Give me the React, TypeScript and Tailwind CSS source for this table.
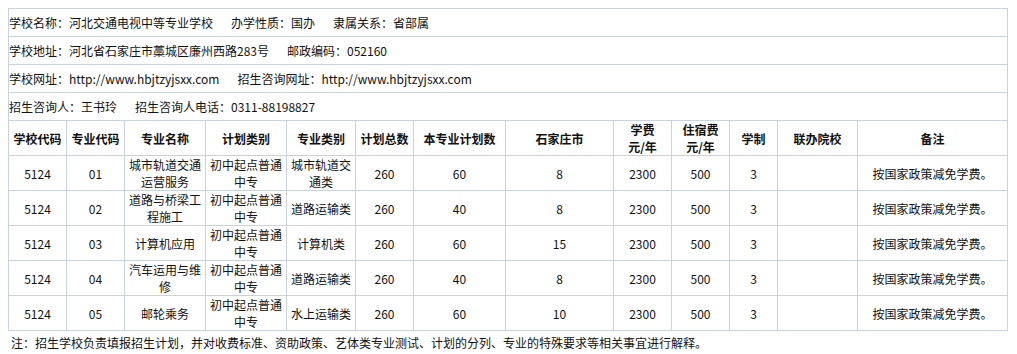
const cols = [58, 58, 81, 81, 69, 58, 92, 108, 58, 58, 48, 80, 150];

const headers: React.ReactNode[] = [
  "学校代码",
  "专业代码",
  "专业名称",
  "计划类别",
  "专业类别",
  "计划总数",
  "本专业计划数",
  "石家庄市",
  <>学费<br />元/年</>,
  <>住宿费<br />元/年</>,
  "学制",
  "联办院校",
  "备注",
];

const rows = [
  { code: "01", name: "城市轨道交通运营服务", kind: "城市轨道交通类", plan: "60", city: "8" },
  { code: "02", name: "道路与桥梁工程施工", kind: "道路运输类", plan: "40", city: "8" },
  { code: "03", name: "计算机应用", kind: "计算机类", plan: "60", city: "15" },
  { code: "04", name: "汽车运用与维修", kind: "道路运输类", plan: "40", city: "8" },
  { code: "05", name: "邮轮乘务", kind: "水上运输类", plan: "60", city: "10" },
];

const InfoRow = ({ items }: { items: string[] }) => (
  <tr>
    <td colSpan={13} className="h-[28px] border border-[#c9d3df] px-0 text-left align-middle">
      {items.map((t, i) => (
        <span key={i} className={i > 0 ? "ml-[18px]" : ""}>
          {t}
        </span>
      ))}
    </td>
  </tr>
);

const App = () => {
  const cell = "border border-[#c9d3df] text-center align-middle px-0 h-[35px]";
  return (
    <div
      className="bg-white w-[1017px] h-[354px] pt-[8px] pl-[8px] text-[12px] leading-[17px] text-[#111]"
      style={{ fontFamily: '"Noto Sans CJK SC", "Noto Sans", sans-serif' }}
    >
      <table className="table-fixed border-collapse w-[1000px]">
        <colgroup>
          {cols.map((w, i) => (
            <col key={i} style={{ width: w }} />
          ))}
        </colgroup>
        <tbody>
          <InfoRow items={["学校名称：河北交通电视中等专业学校", "办学性质：国办", "隶属关系：省部属"]} />
          <InfoRow items={["学校地址：河北省石家庄市藁城区廉州西路283号", "邮政编码：052160"]} />
          <InfoRow items={["学校网址：http://www.hbjtzyjsxx.com", "招生咨询网址：http://www.hbjtzyjsxx.com"]} />
          <InfoRow items={["招生咨询人：王书玲", "招生咨询人电话：0311-88198827"]} />
          <tr>
            {headers.map((h, i) => (
              <td key={i} className={`${cell} font-bold`}>
                {h}
              </td>
            ))}
          </tr>
          {rows.map((r) => (
            <tr key={r.code}>
              <td className={cell}>5124</td>
              <td className={cell}>{r.code}</td>
              <td className={cell}>{r.name}</td>
              <td className={cell}>初中起点普通中专</td>
              <td className={cell}>{r.kind}</td>
              <td className={cell}>260</td>
              <td className={cell}>{r.plan}</td>
              <td className={cell}>{r.city}</td>
              <td className={cell}>2300</td>
              <td className={cell}>500</td>
              <td className={cell}>3</td>
              <td className={cell}></td>
              <td className={cell}>按国家政策减免学费。</td>
            </tr>
          ))}
        </tbody>
      </table>
      <p className="pl-[3px] pt-[3px]">
        注：招生学校负责填报招生计划，并对收费标准、资助政策、艺体类专业测试、计划的分列、专业的特殊要求等相关事宜进行解释。
      </p>
    </div>
  );
};

export default App;
